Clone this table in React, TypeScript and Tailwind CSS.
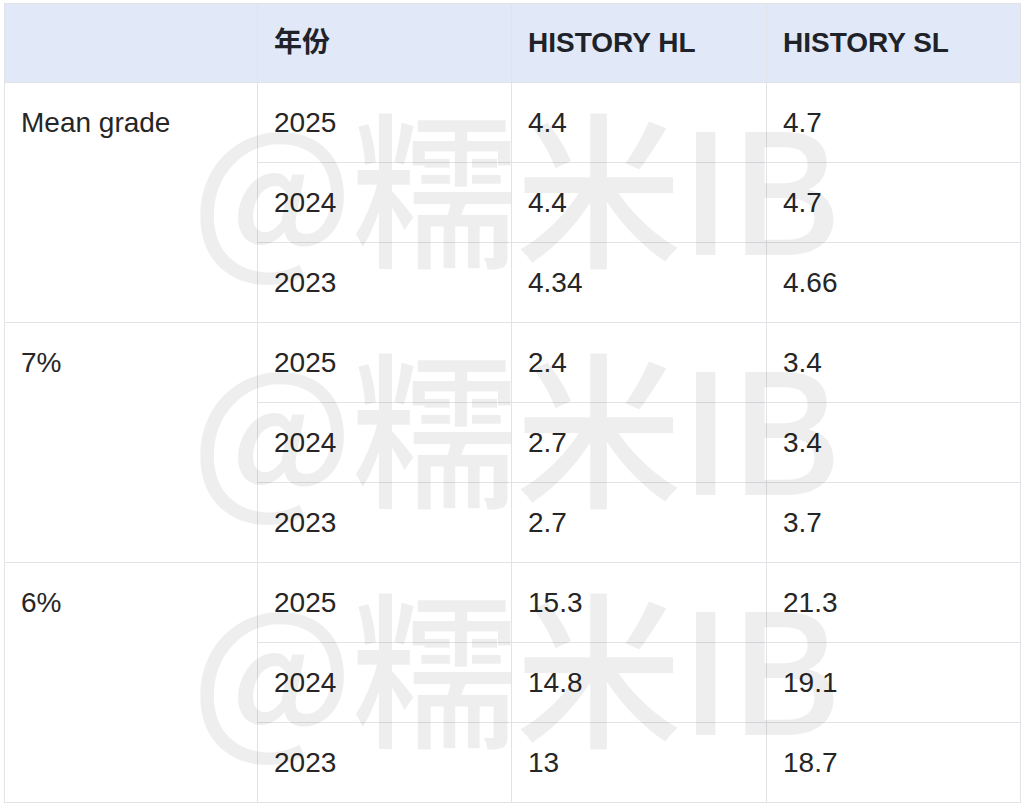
import React from "react";

type Group = {
  label: string;
  rows: { year: string; hl: string; sl: string }[];
};

const groups: Group[] = [
  {
    label: "Mean grade",
    rows: [
      { year: "2025", hl: "4.4", sl: "4.7" },
      { year: "2024", hl: "4.4", sl: "4.7" },
      { year: "2023", hl: "4.34", sl: "4.66" },
    ],
  },
  {
    label: "7%",
    rows: [
      { year: "2025", hl: "2.4", sl: "3.4" },
      { year: "2024", hl: "2.7", sl: "3.4" },
      { year: "2023", hl: "2.7", sl: "3.7" },
    ],
  },
  {
    label: "6%",
    rows: [
      { year: "2025", hl: "15.3", sl: "21.3" },
      { year: "2024", hl: "14.8", sl: "19.1" },
      { year: "2023", hl: "13", sl: "18.7" },
    ],
  },
];

const cell = "border-r border-b border-[#e1e3e6] pl-4 flex items-center";

const App: React.FC = () => {
  return (
    <div className="w-[1024px] h-[806px] bg-white pl-[4px] pt-[3px] font-['Liberation_Sans','Noto_Sans_CJK_SC',sans-serif]">
      <div className="relative w-[1017px]">
        <div className="grid grid-cols-[253px_254px_255px_254px] grid-rows-[79px_repeat(9,80px)] border-t border-l border-[#e1e3e6] text-[28px] text-[#262626]">
          {/* header */}
          <div className={`${cell} bg-[#e1e9f8]`}></div>
          <div className={`${cell} bg-[#e1e9f8] font-bold text-[#1f2329]`}>年份</div>
          <div className={`${cell} bg-[#e1e9f8] font-bold text-[#1f2329]`}>HISTORY HL</div>
          <div className={`${cell} bg-[#e1e9f8] font-bold text-[#1f2329]`}>HISTORY SL</div>

          {groups.map((g) => (
            <React.Fragment key={g.label}>
              <div className="row-span-3 border-r border-b border-[#e1e3e6] pl-4 leading-[80px]">
                {g.label}
              </div>
              {g.rows.map((r) => (
                <React.Fragment key={g.label + r.year}>
                  <div className={cell}>{r.year}</div>
                  <div className={cell}>{r.hl}</div>
                  <div className={cell}>{r.sl}</div>
                </React.Fragment>
              ))}
            </React.Fragment>
          ))}
        </div>

        {/* watermark */}
        <div className="pointer-events-none absolute inset-0">
          {[96, 336, 576].map((top) => (
            <div
              key={top}
              className="absolute left-[187px] whitespace-nowrap text-[167px] leading-none tracking-[-0.015em] font-medium text-black/[0.065] font-['Noto_Sans_CJK_SC',sans-serif]"
              style={{ top }}
            >
              @糯米IB
            </div>
          ))}
        </div>
      </div>
    </div>
  );
};

export default App;
